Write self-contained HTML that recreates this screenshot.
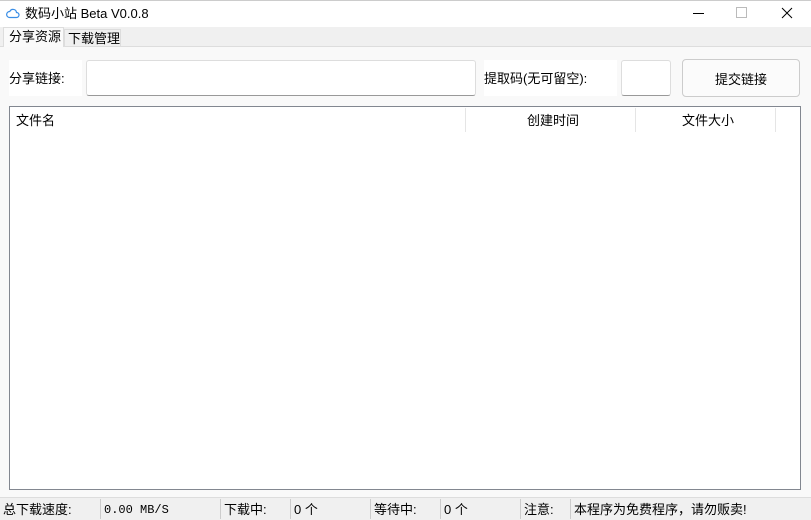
<!DOCTYPE html><html><head><meta charset="utf-8"><style>
*{margin:0;padding:0;box-sizing:border-box}
body{width:811px;height:520px;background:#f9f9f9;font-family:"Liberation Sans","Noto Sans CJK SC",sans-serif;font-size:13px;line-height:16px;color:#000;position:relative;overflow:hidden}
.a{position:absolute;white-space:nowrap}
</style></head><body>
<div class="a" style="left:0;top:0;width:811px;height:27px;background:#fff;border-top:1px solid #ccc"></div>
<svg class="a" style="left:6px;top:7px" width="14" height="12" viewBox="0 0 14 12"><path d="M3.5 10.5h7a2.5 2.5 0 0 0 0-5 3.5 3.5 0 0 0-6.7-1A3 3 0 0 0 3.5 10.5z" fill="none" stroke="#3a8ee6" stroke-width="1.2"/></svg>
<div class="a" style="left:25px;top:6px">数码小站 Beta V0.0.8</div>
<div class="a" style="left:693px;top:13px;width:11px;height:1px;background:#000"></div>
<div class="a" style="left:736px;top:7px;width:11px;height:11px;border:1px solid #bbb"></div>
<svg class="a" style="left:781px;top:7px" width="12" height="12"><path d="M1 1L11 11M11 1L1 11" stroke="#000" stroke-width="1"/></svg>
<div class="a" style="left:0;top:27px;width:811px;height:20px;background:#f0f0f0;border-bottom:1px solid #ddd"></div>
<div class="a" style="left:3px;top:27px;width:61px;height:20px;background:#fafafa;border:1px solid #ddd;border-bottom:none;padding:1px 0 0 5px">分享资源</div>
<div class="a" style="left:64px;top:29px;width:57px;height:18px;background:#f0f0f0;border:1px solid #ddd;padding:1px 0 0 3px;overflow:hidden">下载管理</div>
<div class="a" style="left:9px;top:60px;width:73px;height:36px;background:#fff;padding:11px 0 0 0">分享链接:</div>
<div class="a" style="left:86px;top:60px;width:390px;height:36px;background:#fff;border:1px solid #ddd;border-bottom:1px solid #999;border-radius:3px"></div>
<div class="a" style="left:484px;top:60px;width:133px;height:36px;background:#fff;padding:11px 0 0 0">提取码(无可留空):</div>
<div class="a" style="left:621px;top:60px;width:50px;height:36px;background:#fff;border:1px solid #ddd;border-bottom:1px solid #999;border-radius:3px"></div>
<div class="a" style="left:682px;top:59px;width:118px;height:38px;background:#fbfbfb;border:1px solid #ccc;border-radius:4px;text-align:center;line-height:39px">提交链接</div>
<div class="a" style="left:9px;top:106px;width:792px;height:384px;background:#fff;border:1px solid #828790"></div>
<div class="a" style="left:16px;top:113px">文件名</div>
<div class="a" style="left:465px;top:108px;width:1px;height:24px;background:#e5e5e5"></div>
<div class="a" style="left:527px;top:113px">创建时间</div>
<div class="a" style="left:635px;top:108px;width:1px;height:24px;background:#e5e5e5"></div>
<div class="a" style="left:682px;top:113px">文件大小</div>
<div class="a" style="left:775px;top:108px;width:1px;height:24px;background:#e5e5e5"></div>
<div class="a" style="left:0;top:497px;width:811px;height:23px;background:#f0f0f0;border-top:1px solid #ddd"></div>
<div class="a" style="left:3px;top:502px">总下载速度:</div>
<div class="a" style="left:100px;top:499px;width:1px;height:20px;background:#ccc"></div>
<div class="a" style="left:104px;top:503px;font-family:'Liberation Mono',monospace;font-size:12px;line-height:14px">0.00 MB/S</div>
<div class="a" style="left:220px;top:499px;width:1px;height:20px;background:#ccc"></div>
<div class="a" style="left:224px;top:502px">下载中:</div>
<div class="a" style="left:290px;top:499px;width:1px;height:20px;background:#ccc"></div>
<div class="a" style="left:294px;top:502px">0 个</div>
<div class="a" style="left:370px;top:499px;width:1px;height:20px;background:#ccc"></div>
<div class="a" style="left:374px;top:502px">等待中:</div>
<div class="a" style="left:440px;top:499px;width:1px;height:20px;background:#ccc"></div>
<div class="a" style="left:444px;top:502px">0 个</div>
<div class="a" style="left:520px;top:499px;width:1px;height:20px;background:#ccc"></div>
<div class="a" style="left:524px;top:502px">注意:</div>
<div class="a" style="left:570px;top:499px;width:1px;height:20px;background:#ccc"></div>
<div class="a" style="left:574px;top:502px">本程序为免费程序，请勿贩卖!</div>
</body></html>
